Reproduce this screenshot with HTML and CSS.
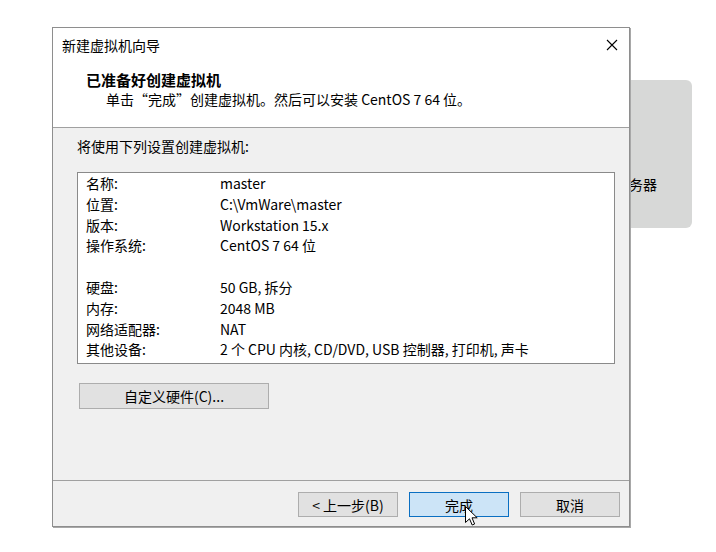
FILE: index.html
```html
<!DOCTYPE html>
<html>
  <head>
    <meta charset="UTF-8" />
    <title>新建虚拟机向导</title>
    <link rel="stylesheet" href="styles.css">
  </head>
  <body>
    <!-- app panel behind the wizard -->
    <div class="app-panel">服务器</div>

    <div class="dialog">
      <div class="titlebar">
        <span class="title">新建虚拟机向导</span>
        <span class="close">
          <svg width="12" height="12" viewBox="0 0 12 12">
            <path d="M1 1 L11 11 M11 1 L1 11" stroke="#000" stroke-width="1.1" fill="none" />
          </svg>
        </span>
      </div>

      <div class="header">
        <div class="header-title">已准备好创建虚拟机</div>
        <div class="header-sub">单击“完成”创建虚拟机。然后可以安装 CentOS 7 64 位。</div>
      </div>

      <div class="content">
        <div class="intro">将使用下列设置创建虚拟机:</div>
        <div class="listbox">
          <div class="row"><span class="key">名称:</span><span>master</span></div>
          <div class="row"><span class="key">位置:</span><span>C:\VmWare\master</span></div>
          <div class="row"><span class="key">版本:</span><span>Workstation 15.x</span></div>
          <div class="row"><span class="key">操作系统:</span><span>CentOS 7 64 位</span></div>
          <div class="row"></div>
          <div class="row"><span class="key">硬盘:</span><span>50 GB, 拆分</span></div>
          <div class="row"><span class="key">内存:</span><span>2048 MB</span></div>
          <div class="row"><span class="key">网络适配器:</span><span>NAT</span></div>
          <div class="row"><span class="key">其他设备:</span><span>2 个 CPU 内核, CD/DVD, USB 控制器, 打印机, 声卡</span></div>
        </div>
        <button class="btn btn-hw">自定义硬件(C)...</button>
      </div>

      <div class="footer">
        <button class="btn">&lt; 上一步(B)</button>
        <button class="btn btn-primary">完成</button>
        <button class="btn">取消</button>
      </div>

      <!-- mouse pointer over the finish button -->
      <svg class="cursor" width="14" height="21" viewBox="0 0 14 21">
        <path d="M0.5 0.5 L0.5 16.5 L4.5 12.8 L7.2 19 L9.6 18 L7 11.8 L12.2 11.8 Z" fill="#fff" stroke="#000" stroke-width="1" stroke-linejoin="round" />
      </svg>
    </div>
  </body>
</html>
```

FILE: styles.css
```css
body {
  margin: 0;
  background: #ffffff;
  font-family: "Noto Sans CJK SC", "Noto Sans", sans-serif;
  font-size: 14px;
  color: #000;
}
.app-panel {
  position: absolute;
  left: 560px;
  top: 80px;
  width: 132px;
  height: 148px;
  box-sizing: border-box;
  padding: 94px 0 0 55px;
  line-height: 20px;
  background: #d7d8d7;
  border-radius: 6px;
}
.dialog {
  position: absolute;
  left: 52px;
  top: 27px;
  width: 578px;
  height: 500px;
  box-sizing: border-box;
  border: 1px solid #8e8e8e;
  box-shadow: 1px 1px 0 #a8a8a8;
  background: #f0f0f0;
  display: flex;
  flex-direction: column;
}
.titlebar {
  height: 33px;
  background: #fff;
  display: flex;
  align-items: center;
  justify-content: space-between;
  padding-left: 9px;
}
.title {
  line-height: 20px;
}
.close {
  width: 34px;
  display: flex;
  justify-content: center;
}
.close svg {
  display: block;
}
.header {
  background: #fff;
  border-bottom: 1px solid #a0a0a0;
  padding: 9px 0 0 33px;
  box-sizing: border-box;
  height: 67px;
}
.header-title {
  font-weight: bold;
  font-size: 15px;
  line-height: 20px;
}
.header-sub {
  line-height: 19px;
  padding-left: 20px;
}
.content {
  height: 353px;
  box-sizing: border-box;
  padding: 8px 14px 0 24px;
  border-bottom: 1px solid #a0a0a0;
}
.intro {
  line-height: 20px;
}
.listbox {
  margin-top: 16px;
  height: 192px;
  box-sizing: border-box;
  border: 1px solid #8a8a8a;
  background: #fff;
  padding: 0 0 0 8px;
}
.row {
  display: flex;
  height: 20.8px;
  line-height: 20.8px;
}
.key {
  width: 134px;
}
.btn {
  font-family: "Noto Sans CJK SC", "Noto Sans", sans-serif;
  font-size: 14px;
  color: #000;
  background: #e1e1e1;
  border: 1px solid #adadad;
  width: 100px;
  height: 25px;
  padding: 0;
  line-height: 20px;
}
.btn-hw {
  margin: 19px 0 0 2px;
  width: 190px;
  height: 26px;
}
.btn-primary {
  background: #cce4f7;
  border-color: #0a6fc2;
}
.footer {
  flex: 1;
  display: flex;
  justify-content: flex-end;
  align-items: flex-start;
  gap: 11px;
  padding: 11px 9px 0 0;
}
.cursor {
  position: absolute;
  left: 412px;
  top: 478px;
}
```
